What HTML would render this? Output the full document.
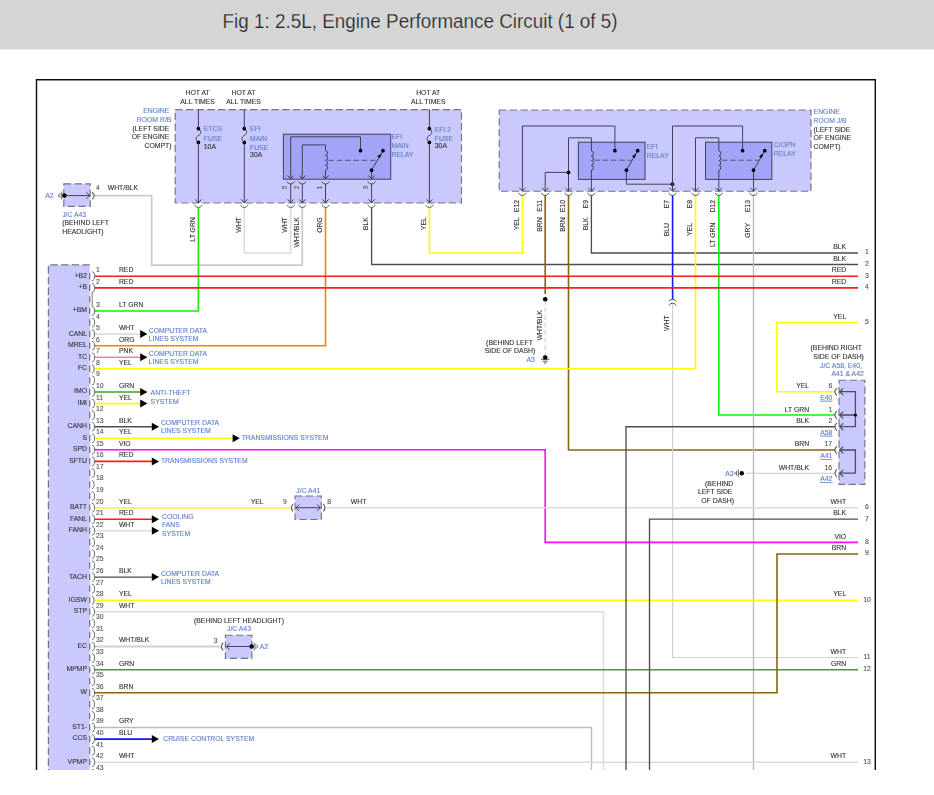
<!DOCTYPE html><html><head><meta charset="utf-8"><title>Fig 1: 2.5L, Engine Performance Circuit (1 of 5)</title><style>html,body{margin:0;padding:0;background:#fff}svg{display:block}</style></head><body><svg width="934" height="795" viewBox="0 0 934 795" font-family="Liberation Sans, Arial, sans-serif">
<defs><clipPath id="clip"><rect x="0" y="0" width="934" height="769.5"/></clipPath><filter id="soft" x="0" y="0" width="934" height="795" filterUnits="userSpaceOnUse"><feGaussianBlur stdDeviation="0.3"/></filter></defs>
<rect x="0" y="0" width="934" height="49.5" fill="#d5d5d5"/>
<text x="222.6" y="28" font-size="19.6" fill="#262626" stroke="#d5d5d5" stroke-width="0.25" textLength="395" lengthAdjust="spacingAndGlyphs">Fig 1: 2.5L, Engine Performance Circuit (1 of 5)</text>
<g clip-path="url(#clip)"><g filter="url(#soft)">
<path d="M36.5,780 V79.7 H875.3 V780" fill="none" stroke="#111" stroke-width="1.4"/>
<rect x="175.2" y="109.6" width="286.3" height="93.4" fill="#c9c9fd" stroke="#747480" stroke-width="1.15" stroke-dasharray="7.3 3.4"/>
<rect x="499.2" y="110.0" width="311.8" height="81.2" fill="#c9c9fd" stroke="#747480" stroke-width="1.15" stroke-dasharray="7.3 3.4"/>
<rect x="48.4" y="264.8" width="41.4" height="540" fill="#c9c9fd"/>
<path d="M89.8,264.8 H48.4 V800" fill="none" stroke="#747480" stroke-width="1.25" stroke-dasharray="7.3 3.4"/>
<path d="M89.7,273 V800" fill="none" stroke="#747480" stroke-width="1.25" stroke-dasharray="6.4 5.17"/>
<rect x="63.8" y="183.8" width="26.4" height="22.6" fill="#c9c9fd" stroke="#747480" stroke-width="1.15" stroke-dasharray="7.3 3.4"/>
<rect x="295.0" y="496.0" width="26.3" height="23.5" fill="#c9c9fd" stroke="#747480" stroke-width="1.15" stroke-dasharray="7.3 3.4"/>
<rect x="225.4" y="635.2" width="26.5" height="23.1" fill="#c9c9fd" stroke="#747480" stroke-width="1.15" stroke-dasharray="7.3 3.4"/>
<rect x="839.0" y="380.2" width="25.9" height="104.2" fill="#c9c9fd" stroke="#747480" stroke-width="1.15" stroke-dasharray="7.3 3.4"/>
<rect x="283.4" y="134.2" width="107.3" height="45.0" fill="#a3a3f7" stroke="#40405a" stroke-width="1"/>
<rect x="578.4" y="142.2" width="66.6" height="37.2" fill="#a3a3f7" stroke="#40405a" stroke-width="1"/>
<rect x="705.5" y="142.2" width="66.3" height="37.2" fill="#a3a3f7" stroke="#40405a" stroke-width="1"/>
<polyline points="94.0,195.6 151.7,195.6 151.7,265.2 302.3,265.2 302.3,207.5" fill="none" stroke="#cbcbcb" stroke-width="1.7" />
<polyline points="198.4,207.5 198.4,311.0 94.0,311.0" fill="none" stroke="#10ee10" stroke-width="1.6" />
<polyline points="244.3,207.5 244.3,253.0 290.7,253.0 290.7,207.5" fill="none" stroke="#dcdcdc" stroke-width="1.6" />
<polyline points="325.5,207.5 325.5,345.7 94.0,345.7" fill="none" stroke="#ff8000" stroke-width="1.6" />
<polyline points="371.6,207.5 371.6,264.5 858.0,264.5" fill="none" stroke="#4e4e4e" stroke-width="1.35" />
<polyline points="429.4,207.5 429.4,253.0 522.4,253.0 522.4,195.5" fill="none" stroke="#ffff00" stroke-width="1.6" />
<polyline points="545.2,195.5 545.2,294.0" fill="none" stroke="#8a640a" stroke-width="1.6" />
<polyline points="545.2,300.0 545.2,356.0" fill="none" stroke="#cfcfcf" stroke-width="1.1" stroke-dasharray="5 2.5"/>
<polyline points="568.5,195.5 568.5,450.0 835.0,450.0" fill="none" stroke="#8a640a" stroke-width="1.6" />
<polyline points="591.4,195.5 591.4,253.0 858.0,253.0" fill="none" stroke="#4e4e4e" stroke-width="1.35" />
<polyline points="672.6,195.5 672.6,299.3" fill="none" stroke="#1414ff" stroke-width="1.6" />
<polyline points="672.6,303.4 672.6,657.5 858.0,657.5" fill="none" stroke="#d2d2d2" stroke-width="1.2" />
<polyline points="695.5,195.5 695.5,368.7 94.0,368.7" fill="none" stroke="#ffff00" stroke-width="1.6" />
<polyline points="718.8,195.5 718.8,415.0 835.0,415.0" fill="none" stroke="#10ee10" stroke-width="1.6" />
<polyline points="753.5,195.5 753.5,780.0" fill="none" stroke="#bcbcbc" stroke-width="1.4" />
<polyline points="94.0,276.2 858.0,276.2" fill="none" stroke="#ff1c1c" stroke-width="1.6" />
<polyline points="94.0,287.9 858.0,287.9" fill="none" stroke="#ff1c1c" stroke-width="1.6" />
<polyline points="94.0,334.1 141.4,334.1" fill="none" stroke="#dcdcdc" stroke-width="1.6" />
<polygon points="147.4,334.1 140.2,330.1 140.2,338.1" fill="#000"/>
<polyline points="94.0,357.3 141.4,357.3" fill="none" stroke="#ff7f9f" stroke-width="1.6" />
<polygon points="147.4,357.3 140.2,353.3 140.2,361.3" fill="#000"/>
<polyline points="94.0,392.0 141.4,392.0" fill="none" stroke="#3aa81a" stroke-width="1.6" />
<polygon points="147.4,392.0 140.2,388.0 140.2,396.0" fill="#000"/>
<polyline points="94.0,403.6 141.4,403.6" fill="none" stroke="#ffff00" stroke-width="1.6" />
<polygon points="147.4,403.6 140.2,399.6 140.2,407.6" fill="#000"/>
<polyline points="94.0,426.7 153.0,426.7" fill="none" stroke="#4e4e4e" stroke-width="1.35" />
<polygon points="159.0,426.7 151.8,422.7 151.8,430.7" fill="#000"/>
<polyline points="94.0,438.3 233.8,438.3" fill="none" stroke="#ffff00" stroke-width="1.6" />
<polygon points="239.8,438.3 232.6,434.3 232.6,442.3" fill="#000"/>
<polyline points="94.0,461.4 153.0,461.4" fill="none" stroke="#ff1c1c" stroke-width="1.6" />
<polygon points="159.0,461.4 151.8,457.4 151.8,465.4" fill="#000"/>
<polyline points="94.0,519.3 153.0,519.3" fill="none" stroke="#ff1c1c" stroke-width="1.6" />
<polygon points="159.0,519.3 151.8,515.3 151.8,523.3" fill="#000"/>
<polyline points="94.0,530.8 153.0,530.8" fill="none" stroke="#dcdcdc" stroke-width="1.6" />
<polygon points="159.0,530.8 151.8,526.8 151.8,534.8" fill="#000"/>
<polyline points="94.0,577.1 153.0,577.1" fill="none" stroke="#4e4e4e" stroke-width="1.35" />
<polygon points="159.0,577.1 151.8,573.1 151.8,581.1" fill="#000"/>
<polyline points="94.0,739.1 153.0,739.1" fill="none" stroke="#1414ff" stroke-width="1.6" />
<polygon points="159.0,739.1 151.8,735.1 151.8,743.1" fill="#000"/>
<polyline points="94.0,449.8 545.2,449.8 545.2,542.4 858.0,542.4" fill="none" stroke="#ff08ff" stroke-width="1.6" />
<polyline points="94.0,507.7 291.0,507.7" fill="none" stroke="#ffff00" stroke-width="1.6" />
<polyline points="325.5,507.7 858.0,507.7" fill="none" stroke="#dcdcdc" stroke-width="1.5" />
<polyline points="94.0,600.2 858.0,600.2" fill="none" stroke="#ffff00" stroke-width="1.6" />
<polyline points="94.0,611.8 603.5,611.8 603.5,780.0" fill="none" stroke="#dcdcdc" stroke-width="1.6" />
<polyline points="94.0,646.5 220.6,646.5" fill="none" stroke="#d2d2d2" stroke-width="1.8" />
<polyline points="94.0,669.7 858.0,669.7" fill="none" stroke="#3aa81a" stroke-width="1.6" />
<polyline points="94.0,692.8 777.0,692.8 777.0,554.0 858.0,554.0" fill="none" stroke="#8a640a" stroke-width="1.6" />
<polyline points="94.0,727.5 591.5,727.5 591.5,780.0" fill="none" stroke="#bcbcbc" stroke-width="1.4" />
<polyline points="94.0,762.2 858.0,762.2" fill="none" stroke="#dcdcdc" stroke-width="1.5" />
<polyline points="858.0,322.5 776.8,322.5 776.8,391.7 835.0,391.7" fill="none" stroke="#ffff00" stroke-width="1.6" />
<polyline points="835.0,426.7 626.0,426.7 626.0,780.0" fill="none" stroke="#4e4e4e" stroke-width="1.35" />
<polyline points="858.0,519.1 649.5,519.1 649.5,780.0" fill="none" stroke="#4e4e4e" stroke-width="1.35" />
<polyline points="746.0,473.2 835.0,473.2" fill="none" stroke="#c8c8c8" stroke-width="1.1" />
<path d="M198.4,109.6 V128.7 M198.4,142.4 V202.8" stroke="#40405a" stroke-width="1" fill="none"/>
<path d="M198.4,128.7 C202.0,131 201.0,134.5 198.4,135.5 C195.8,136.5 194.8,140 198.4,142.4" stroke="#40405a" stroke-width="1" fill="none"/>
<circle cx="198.4" cy="128.7" r="1.85" fill="#000"/>
<circle cx="198.4" cy="142.4" r="1.85" fill="#000"/>
<polyline points="195.3,199.3 198.4,202.8 201.5,199.3" fill="none" stroke="#40405a" stroke-width="1"/>
<path d="M194.4,205.0 Q198.4,210.0 202.4,205.0" fill="none" stroke="#585858" stroke-width="1"/>
<path d="M244.3,109.6 V128.7 M244.3,142.4 V202.8" stroke="#40405a" stroke-width="1" fill="none"/>
<path d="M244.3,128.7 C247.9,131 246.9,134.5 244.3,135.5 C241.70000000000002,136.5 240.70000000000002,140 244.3,142.4" stroke="#40405a" stroke-width="1" fill="none"/>
<circle cx="244.3" cy="128.7" r="1.85" fill="#000"/>
<circle cx="244.3" cy="142.4" r="1.85" fill="#000"/>
<polyline points="241.2,199.3 244.3,202.8 247.4,199.3" fill="none" stroke="#40405a" stroke-width="1"/>
<path d="M240.3,205.0 Q244.3,210.0 248.3,205.0" fill="none" stroke="#585858" stroke-width="1"/>
<path d="M429.4,109.6 V128.7 M429.4,142.4 V202.8" stroke="#40405a" stroke-width="1" fill="none"/>
<path d="M429.4,128.7 C433.0,131 432.0,134.5 429.4,135.5 C426.79999999999995,136.5 425.79999999999995,140 429.4,142.4" stroke="#40405a" stroke-width="1" fill="none"/>
<circle cx="429.4" cy="128.7" r="1.85" fill="#000"/>
<circle cx="429.4" cy="142.4" r="1.85" fill="#000"/>
<polyline points="426.3,199.3 429.4,202.8 432.5,199.3" fill="none" stroke="#40405a" stroke-width="1"/>
<path d="M425.4,205.0 Q429.4,210.0 433.4,205.0" fill="none" stroke="#585858" stroke-width="1"/>
<path d="M290.7,179 V136.8 H360.5 V150.7" fill="none" stroke="#40405a" stroke-width="1" />
<path d="M302.3,179 V144.9 H325.5 V150.7 M325.5,170 V179" fill="none" stroke="#40405a" stroke-width="1" />
<path d="M325.5,150.7 a2.05,2.41 0 0 1 0,4.83 a2.05,2.41 0 0 1 0,4.83 a2.05,2.41 0 0 1 0,4.83 a2.05,2.41 0 0 1 0,4.83" fill="none" stroke="#40405a" stroke-width="1"/>
<path d="M328.5,160.3 H376.5" fill="none" stroke="#40405a" stroke-width="0.8" stroke-dasharray="5.5 2.8"/>
<path d="M371.6,179 V170.2 L383,150.7" fill="none" stroke="#40405a" stroke-width="1" />
<polygon points="381.6,153.2 377.2,156.4 380,158" fill="#000"/>
<circle cx="360.5" cy="150.7" r="1.85" fill="#000"/>
<circle cx="383.0" cy="150.7" r="1.85" fill="#000"/>
<circle cx="371.6" cy="170.2" r="1.85" fill="#000"/>
<polyline points="287.6,175.5 290.7,179.0 293.8,175.5" fill="none" stroke="#40405a" stroke-width="1"/>
<path d="M286.7,181.6 Q290.7,186.6 294.7,181.6" fill="none" stroke="#40405a" stroke-width="1"/>
<path d="M290.7,183.8 V202.8" fill="none" stroke="#40405a" stroke-width="1" />
<polyline points="287.6,199.3 290.7,202.8 293.8,199.3" fill="none" stroke="#40405a" stroke-width="1"/>
<path d="M286.7,205.0 Q290.7,210.0 294.7,205.0" fill="none" stroke="#585858" stroke-width="1"/>
<text x="287.1" y="189.2" fill="#555" stroke="#555" stroke-width="0.12" font-size="6.4" text-anchor="start" transform="rotate(-90 287.1 189.2)">5</text>
<polyline points="299.2,175.5 302.3,179.0 305.4,175.5" fill="none" stroke="#40405a" stroke-width="1"/>
<path d="M298.3,181.6 Q302.3,186.6 306.3,181.6" fill="none" stroke="#40405a" stroke-width="1"/>
<path d="M302.3,183.8 V202.8" fill="none" stroke="#40405a" stroke-width="1" />
<polyline points="299.2,199.3 302.3,202.8 305.4,199.3" fill="none" stroke="#40405a" stroke-width="1"/>
<path d="M298.3,205.0 Q302.3,210.0 306.3,205.0" fill="none" stroke="#585858" stroke-width="1"/>
<text x="298.7" y="189.2" fill="#555" stroke="#555" stroke-width="0.12" font-size="6.4" text-anchor="start" transform="rotate(-90 298.7 189.2)">2</text>
<polyline points="322.4,175.5 325.5,179.0 328.6,175.5" fill="none" stroke="#40405a" stroke-width="1"/>
<path d="M321.5,181.6 Q325.5,186.6 329.5,181.6" fill="none" stroke="#40405a" stroke-width="1"/>
<path d="M325.5,183.8 V202.8" fill="none" stroke="#40405a" stroke-width="1" />
<polyline points="322.4,199.3 325.5,202.8 328.6,199.3" fill="none" stroke="#40405a" stroke-width="1"/>
<path d="M321.5,205.0 Q325.5,210.0 329.5,205.0" fill="none" stroke="#585858" stroke-width="1"/>
<text x="321.9" y="189.2" fill="#555" stroke="#555" stroke-width="0.12" font-size="6.4" text-anchor="start" transform="rotate(-90 321.9 189.2)">1</text>
<polyline points="368.5,175.5 371.6,179.0 374.7,175.5" fill="none" stroke="#40405a" stroke-width="1"/>
<path d="M367.6,181.6 Q371.6,186.6 375.6,181.6" fill="none" stroke="#40405a" stroke-width="1"/>
<path d="M371.6,183.8 V202.8" fill="none" stroke="#40405a" stroke-width="1" />
<polyline points="368.5,199.3 371.6,202.8 374.7,199.3" fill="none" stroke="#40405a" stroke-width="1"/>
<path d="M367.6,205.0 Q371.6,210.0 375.6,205.0" fill="none" stroke="#585858" stroke-width="1"/>
<text x="368.0" y="189.2" fill="#555" stroke="#555" stroke-width="0.12" font-size="6.4" text-anchor="start" transform="rotate(-90 368.0 189.2)">3</text>
<path d="M522.4,191 V126 H614.9 V150.7" fill="none" stroke="#40405a" stroke-width="1" />
<path d="M545.2,191 V172.4 H568.5" fill="none" stroke="#40405a" stroke-width="1" />
<path d="M568.5,191 V137.8 H591.4 V151 M591.4,170.2 V191" fill="none" stroke="#40405a" stroke-width="1" />
<path d="M591.4,151 a2.04,2.40 0 0 1 0,4.80 a2.04,2.40 0 0 1 0,4.80 a2.04,2.40 0 0 1 0,4.80 a2.04,2.40 0 0 1 0,4.80" fill="none" stroke="#40405a" stroke-width="1"/>
<path d="M594.4,160.2 H631" fill="none" stroke="#40405a" stroke-width="0.8" stroke-dasharray="5.5 2.8"/>
<path d="M626.4,170.2 L637.7,150.7 M626.4,170.2 V184.2 H672.5" fill="none" stroke="#40405a" stroke-width="1" />
<polygon points="636.3,153.2 631.9,156.4 634.7,158" fill="#000"/>
<circle cx="614.9" cy="150.7" r="1.85" fill="#000"/>
<circle cx="637.7" cy="150.7" r="1.85" fill="#000"/>
<circle cx="626.4" cy="170.2" r="1.85" fill="#000"/>
<circle cx="568.5" cy="172.4" r="1.85" fill="#000"/>
<circle cx="672.5" cy="184.2" r="1.85" fill="#000"/>
<path d="M672.5,191 V126 H742.6 V150.7" fill="none" stroke="#40405a" stroke-width="1" />
<path d="M695.5,191 V137.8 H718.8 V151 M718.8,170.2 V191" fill="none" stroke="#40405a" stroke-width="1" />
<path d="M718.8,151 a2.04,2.40 0 0 1 0,4.80 a2.04,2.40 0 0 1 0,4.80 a2.04,2.40 0 0 1 0,4.80 a2.04,2.40 0 0 1 0,4.80" fill="none" stroke="#40405a" stroke-width="1"/>
<path d="M721.8,160.2 H759" fill="none" stroke="#40405a" stroke-width="0.8" stroke-dasharray="5.5 2.8"/>
<path d="M753.5,191 V170.2 L764.8,150.7" fill="none" stroke="#40405a" stroke-width="1" />
<polygon points="763.4,153.2 759,156.4 761.8,158" fill="#000"/>
<circle cx="742.6" cy="150.7" r="1.85" fill="#000"/>
<circle cx="764.8" cy="150.7" r="1.85" fill="#000"/>
<circle cx="753.5" cy="170.2" r="1.85" fill="#000"/>
<polyline points="519.3,187.7 522.4,191.2 525.5,187.7" fill="none" stroke="#40405a" stroke-width="1"/>
<path d="M518.4,193.0 Q522.4,198.0 526.4,193.0" fill="none" stroke="#4a4a4a" stroke-width="1"/>
<polyline points="542.1,187.7 545.2,191.2 548.3,187.7" fill="none" stroke="#40405a" stroke-width="1"/>
<path d="M541.2,193.0 Q545.2,198.0 549.2,193.0" fill="none" stroke="#4a4a4a" stroke-width="1"/>
<polyline points="565.4,187.7 568.5,191.2 571.6,187.7" fill="none" stroke="#40405a" stroke-width="1"/>
<path d="M564.5,193.0 Q568.5,198.0 572.5,193.0" fill="none" stroke="#4a4a4a" stroke-width="1"/>
<polyline points="588.3,187.7 591.4,191.2 594.5,187.7" fill="none" stroke="#40405a" stroke-width="1"/>
<path d="M587.4,193.0 Q591.4,198.0 595.4,193.0" fill="none" stroke="#4a4a4a" stroke-width="1"/>
<polyline points="669.4,187.7 672.5,191.2 675.6,187.7" fill="none" stroke="#40405a" stroke-width="1"/>
<path d="M668.5,193.0 Q672.5,198.0 676.5,193.0" fill="none" stroke="#4a4a4a" stroke-width="1"/>
<polyline points="692.4,187.7 695.5,191.2 698.6,187.7" fill="none" stroke="#40405a" stroke-width="1"/>
<path d="M691.5,193.0 Q695.5,198.0 699.5,193.0" fill="none" stroke="#4a4a4a" stroke-width="1"/>
<polyline points="715.7,187.7 718.8,191.2 721.9,187.7" fill="none" stroke="#40405a" stroke-width="1"/>
<path d="M714.8,193.0 Q718.8,198.0 722.8,193.0" fill="none" stroke="#4a4a4a" stroke-width="1"/>
<polyline points="750.4,187.7 753.5,191.2 756.6,187.7" fill="none" stroke="#40405a" stroke-width="1"/>
<path d="M749.5,193.0 Q753.5,198.0 757.5,193.0" fill="none" stroke="#4a4a4a" stroke-width="1"/>
<circle cx="545.2" cy="299.2" r="2.3" fill="#000"/>
<circle cx="545.2" cy="357.5" r="2.3" fill="#000"/>
<path d="M541,359.3 H549.4 M542.6,361.2 H547.8 M544,363 H546.4" fill="none" stroke="#333" stroke-width="0.8" />
<path d="M668.8,301.4 Q672.6,296.8 676.4,301.4 M668.8,305.6 Q672.6,300.6 676.4,305.6" fill="none" stroke="#4a4a4a" stroke-width="1" />
<path d="M91.9,271.8 A2.7,4.4 0 0 1 91.9,280.6" fill="none" stroke="#6c6c7c" stroke-width="1.0" />
<text x="96.0" y="272.1" fill="#555" stroke="#555" stroke-width="0.12" font-size="6.85" text-anchor="start">1</text>
<path d="M91.9,283.5 A2.7,4.4 0 0 1 91.9,292.3" fill="none" stroke="#6c6c7c" stroke-width="1.0" />
<text x="96.0" y="283.8" fill="#555" stroke="#555" stroke-width="0.12" font-size="6.85" text-anchor="start">2</text>
<path d="M91.9,306.6 A2.7,4.4 0 0 1 91.9,315.4" fill="none" stroke="#6c6c7c" stroke-width="1.0" />
<text x="96.0" y="306.9" fill="#555" stroke="#555" stroke-width="0.12" font-size="6.85" text-anchor="start">3</text>
<path d="M91.9,318.2 A2.7,4.4 0 0 1 91.9,327.0" fill="none" stroke="#6c6c7c" stroke-width="1.0" />
<text x="96.0" y="318.5" fill="#555" stroke="#555" stroke-width="0.12" font-size="6.85" text-anchor="start">4</text>
<path d="M91.9,329.7 A2.7,4.4 0 0 1 91.9,338.5" fill="none" stroke="#6c6c7c" stroke-width="1.0" />
<text x="96.0" y="330.0" fill="#555" stroke="#555" stroke-width="0.12" font-size="6.85" text-anchor="start">5</text>
<path d="M91.9,341.3 A2.7,4.4 0 0 1 91.9,350.1" fill="none" stroke="#6c6c7c" stroke-width="1.0" />
<text x="96.0" y="341.6" fill="#555" stroke="#555" stroke-width="0.12" font-size="6.85" text-anchor="start">6</text>
<path d="M91.9,352.9 A2.7,4.4 0 0 1 91.9,361.7" fill="none" stroke="#6c6c7c" stroke-width="1.0" />
<text x="96.0" y="353.2" fill="#555" stroke="#555" stroke-width="0.12" font-size="6.85" text-anchor="start">7</text>
<path d="M91.9,364.5 A2.7,4.4 0 0 1 91.9,373.2" fill="none" stroke="#6c6c7c" stroke-width="1.0" />
<text x="96.0" y="364.8" fill="#555" stroke="#555" stroke-width="0.12" font-size="6.85" text-anchor="start">8</text>
<path d="M91.9,376.0 A2.7,4.4 0 0 1 91.9,384.8" fill="none" stroke="#6c6c7c" stroke-width="1.0" />
<text x="96.0" y="376.3" fill="#555" stroke="#555" stroke-width="0.12" font-size="6.85" text-anchor="start">9</text>
<path d="M91.9,387.6 A2.7,4.4 0 0 1 91.9,396.4" fill="none" stroke="#6c6c7c" stroke-width="1.0" />
<text x="96.0" y="387.9" fill="#555" stroke="#555" stroke-width="0.12" font-size="6.85" text-anchor="start">10</text>
<path d="M91.9,399.2 A2.7,4.4 0 0 1 91.9,408.0" fill="none" stroke="#6c6c7c" stroke-width="1.0" />
<text x="96.0" y="399.5" fill="#555" stroke="#555" stroke-width="0.12" font-size="6.85" text-anchor="start">11</text>
<path d="M91.9,410.7 A2.7,4.4 0 0 1 91.9,419.5" fill="none" stroke="#6c6c7c" stroke-width="1.0" />
<text x="96.0" y="411.0" fill="#555" stroke="#555" stroke-width="0.12" font-size="6.85" text-anchor="start">12</text>
<path d="M91.9,422.3 A2.7,4.4 0 0 1 91.9,431.1" fill="none" stroke="#6c6c7c" stroke-width="1.0" />
<text x="96.0" y="422.6" fill="#555" stroke="#555" stroke-width="0.12" font-size="6.85" text-anchor="start">13</text>
<path d="M91.9,433.9 A2.7,4.4 0 0 1 91.9,442.7" fill="none" stroke="#6c6c7c" stroke-width="1.0" />
<text x="96.0" y="434.2" fill="#555" stroke="#555" stroke-width="0.12" font-size="6.85" text-anchor="start">14</text>
<path d="M91.9,445.4 A2.7,4.4 0 0 1 91.9,454.2" fill="none" stroke="#6c6c7c" stroke-width="1.0" />
<text x="96.0" y="445.7" fill="#555" stroke="#555" stroke-width="0.12" font-size="6.85" text-anchor="start">15</text>
<path d="M91.9,457.0 A2.7,4.4 0 0 1 91.9,465.8" fill="none" stroke="#6c6c7c" stroke-width="1.0" />
<text x="96.0" y="457.3" fill="#555" stroke="#555" stroke-width="0.12" font-size="6.85" text-anchor="start">16</text>
<path d="M91.9,468.6 A2.7,4.4 0 0 1 91.9,477.4" fill="none" stroke="#6c6c7c" stroke-width="1.0" />
<text x="96.0" y="468.9" fill="#555" stroke="#555" stroke-width="0.12" font-size="6.85" text-anchor="start">17</text>
<path d="M91.9,480.2 A2.7,4.4 0 0 1 91.9,488.9" fill="none" stroke="#6c6c7c" stroke-width="1.0" />
<text x="96.0" y="480.4" fill="#555" stroke="#555" stroke-width="0.12" font-size="6.85" text-anchor="start">18</text>
<path d="M91.9,491.7 A2.7,4.4 0 0 1 91.9,500.5" fill="none" stroke="#6c6c7c" stroke-width="1.0" />
<text x="96.0" y="492.0" fill="#555" stroke="#555" stroke-width="0.12" font-size="6.85" text-anchor="start">19</text>
<path d="M91.9,503.3 A2.7,4.4 0 0 1 91.9,512.1" fill="none" stroke="#6c6c7c" stroke-width="1.0" />
<text x="96.0" y="503.6" fill="#555" stroke="#555" stroke-width="0.12" font-size="6.85" text-anchor="start">20</text>
<path d="M91.9,514.9 A2.7,4.4 0 0 1 91.9,523.7" fill="none" stroke="#6c6c7c" stroke-width="1.0" />
<text x="96.0" y="515.2" fill="#555" stroke="#555" stroke-width="0.12" font-size="6.85" text-anchor="start">21</text>
<path d="M91.9,526.4 A2.7,4.4 0 0 1 91.9,535.2" fill="none" stroke="#6c6c7c" stroke-width="1.0" />
<text x="96.0" y="526.7" fill="#555" stroke="#555" stroke-width="0.12" font-size="6.85" text-anchor="start">22</text>
<path d="M91.9,538.0 A2.7,4.4 0 0 1 91.9,546.8" fill="none" stroke="#6c6c7c" stroke-width="1.0" />
<text x="96.0" y="538.3" fill="#555" stroke="#555" stroke-width="0.12" font-size="6.85" text-anchor="start">23</text>
<path d="M91.9,549.6 A2.7,4.4 0 0 1 91.9,558.4" fill="none" stroke="#6c6c7c" stroke-width="1.0" />
<text x="96.0" y="549.9" fill="#555" stroke="#555" stroke-width="0.12" font-size="6.85" text-anchor="start">24</text>
<path d="M91.9,561.1 A2.7,4.4 0 0 1 91.9,569.9" fill="none" stroke="#6c6c7c" stroke-width="1.0" />
<text x="96.0" y="561.4" fill="#555" stroke="#555" stroke-width="0.12" font-size="6.85" text-anchor="start">25</text>
<path d="M91.9,572.7 A2.7,4.4 0 0 1 91.9,581.5" fill="none" stroke="#6c6c7c" stroke-width="1.0" />
<text x="96.0" y="573.0" fill="#555" stroke="#555" stroke-width="0.12" font-size="6.85" text-anchor="start">26</text>
<path d="M91.9,584.3 A2.7,4.4 0 0 1 91.9,593.1" fill="none" stroke="#6c6c7c" stroke-width="1.0" />
<text x="96.0" y="584.6" fill="#555" stroke="#555" stroke-width="0.12" font-size="6.85" text-anchor="start">27</text>
<path d="M91.9,595.9 A2.7,4.4 0 0 1 91.9,604.6" fill="none" stroke="#6c6c7c" stroke-width="1.0" />
<text x="96.0" y="596.1" fill="#555" stroke="#555" stroke-width="0.12" font-size="6.85" text-anchor="start">28</text>
<path d="M91.9,607.4 A2.7,4.4 0 0 1 91.9,616.2" fill="none" stroke="#6c6c7c" stroke-width="1.0" />
<text x="96.0" y="607.7" fill="#555" stroke="#555" stroke-width="0.12" font-size="6.85" text-anchor="start">29</text>
<path d="M91.9,619.0 A2.7,4.4 0 0 1 91.9,627.8" fill="none" stroke="#6c6c7c" stroke-width="1.0" />
<text x="96.0" y="619.3" fill="#555" stroke="#555" stroke-width="0.12" font-size="6.85" text-anchor="start">30</text>
<path d="M91.9,630.6 A2.7,4.4 0 0 1 91.9,639.4" fill="none" stroke="#6c6c7c" stroke-width="1.0" />
<text x="96.0" y="630.9" fill="#555" stroke="#555" stroke-width="0.12" font-size="6.85" text-anchor="start">31</text>
<path d="M91.9,642.1 A2.7,4.4 0 0 1 91.9,650.9" fill="none" stroke="#6c6c7c" stroke-width="1.0" />
<text x="96.0" y="642.4" fill="#555" stroke="#555" stroke-width="0.12" font-size="6.85" text-anchor="start">32</text>
<path d="M91.9,653.7 A2.7,4.4 0 0 1 91.9,662.5" fill="none" stroke="#6c6c7c" stroke-width="1.0" />
<text x="96.0" y="654.0" fill="#555" stroke="#555" stroke-width="0.12" font-size="6.85" text-anchor="start">33</text>
<path d="M91.9,665.3 A2.7,4.4 0 0 1 91.9,674.1" fill="none" stroke="#6c6c7c" stroke-width="1.0" />
<text x="96.0" y="665.6" fill="#555" stroke="#555" stroke-width="0.12" font-size="6.85" text-anchor="start">34</text>
<path d="M91.9,676.8 A2.7,4.4 0 0 1 91.9,685.6" fill="none" stroke="#6c6c7c" stroke-width="1.0" />
<text x="96.0" y="677.1" fill="#555" stroke="#555" stroke-width="0.12" font-size="6.85" text-anchor="start">35</text>
<path d="M91.9,688.4 A2.7,4.4 0 0 1 91.9,697.2" fill="none" stroke="#6c6c7c" stroke-width="1.0" />
<text x="96.0" y="688.7" fill="#555" stroke="#555" stroke-width="0.12" font-size="6.85" text-anchor="start">36</text>
<path d="M91.9,700.0 A2.7,4.4 0 0 1 91.9,708.8" fill="none" stroke="#6c6c7c" stroke-width="1.0" />
<text x="96.0" y="700.3" fill="#555" stroke="#555" stroke-width="0.12" font-size="6.85" text-anchor="start">37</text>
<path d="M91.9,711.6 A2.7,4.4 0 0 1 91.9,720.4" fill="none" stroke="#6c6c7c" stroke-width="1.0" />
<text x="96.0" y="711.9" fill="#555" stroke="#555" stroke-width="0.12" font-size="6.85" text-anchor="start">38</text>
<path d="M91.9,723.1 A2.7,4.4 0 0 1 91.9,731.9" fill="none" stroke="#6c6c7c" stroke-width="1.0" />
<text x="96.0" y="723.4" fill="#555" stroke="#555" stroke-width="0.12" font-size="6.85" text-anchor="start">39</text>
<path d="M91.9,734.7 A2.7,4.4 0 0 1 91.9,743.5" fill="none" stroke="#6c6c7c" stroke-width="1.0" />
<text x="96.0" y="735.0" fill="#555" stroke="#555" stroke-width="0.12" font-size="6.85" text-anchor="start">40</text>
<path d="M91.9,746.3 A2.7,4.4 0 0 1 91.9,755.1" fill="none" stroke="#6c6c7c" stroke-width="1.0" />
<text x="96.0" y="746.6" fill="#555" stroke="#555" stroke-width="0.12" font-size="6.85" text-anchor="start">41</text>
<path d="M91.9,757.8 A2.7,4.4 0 0 1 91.9,766.6" fill="none" stroke="#6c6c7c" stroke-width="1.0" />
<text x="96.0" y="758.1" fill="#555" stroke="#555" stroke-width="0.12" font-size="6.85" text-anchor="start">42</text>
<path d="M91.9,769.4 A2.7,4.4 0 0 1 91.9,778.2" fill="none" stroke="#6c6c7c" stroke-width="1.0" />
<text x="96.0" y="769.7" fill="#555" stroke="#555" stroke-width="0.12" font-size="6.85" text-anchor="start">43</text>
<path d="M92.2,292 V306" fill="none" stroke="#585858" stroke-width="0.8" />
<text x="87.0" y="277.6" fill="#333333" stroke="#333333" stroke-width="0.12" font-size="6.85" text-anchor="end">+B2</text>
<text x="87.0" y="289.2" fill="#333333" stroke="#333333" stroke-width="0.12" font-size="6.85" text-anchor="end">+B</text>
<text x="87.0" y="312.4" fill="#333333" stroke="#333333" stroke-width="0.12" font-size="6.85" text-anchor="end">+BM</text>
<text x="87.0" y="335.5" fill="#333333" stroke="#333333" stroke-width="0.12" font-size="6.85" text-anchor="end">CANL</text>
<text x="87.0" y="347.1" fill="#333333" stroke="#333333" stroke-width="0.12" font-size="6.85" text-anchor="end">MREL</text>
<text x="87.0" y="358.6" fill="#333333" stroke="#333333" stroke-width="0.12" font-size="6.85" text-anchor="end">TC</text>
<text x="87.0" y="370.2" fill="#333333" stroke="#333333" stroke-width="0.12" font-size="6.85" text-anchor="end">FC</text>
<text x="87.0" y="393.3" fill="#333333" stroke="#333333" stroke-width="0.12" font-size="6.85" text-anchor="end">IMO</text>
<text x="87.0" y="404.9" fill="#333333" stroke="#333333" stroke-width="0.12" font-size="6.85" text-anchor="end">IMI</text>
<text x="87.0" y="428.1" fill="#333333" stroke="#333333" stroke-width="0.12" font-size="6.85" text-anchor="end">CANH</text>
<text x="87.0" y="439.6" fill="#333333" stroke="#333333" stroke-width="0.12" font-size="6.85" text-anchor="end">S</text>
<text x="87.0" y="451.2" fill="#333333" stroke="#333333" stroke-width="0.12" font-size="6.85" text-anchor="end">SPD</text>
<text x="87.0" y="462.8" fill="#333333" stroke="#333333" stroke-width="0.12" font-size="6.85" text-anchor="end">SFTU</text>
<text x="87.0" y="509.0" fill="#333333" stroke="#333333" stroke-width="0.12" font-size="6.85" text-anchor="end">BATT</text>
<text x="87.0" y="520.6" fill="#333333" stroke="#333333" stroke-width="0.12" font-size="6.85" text-anchor="end">FANL</text>
<text x="87.0" y="532.2" fill="#333333" stroke="#333333" stroke-width="0.12" font-size="6.85" text-anchor="end">FANH</text>
<text x="87.0" y="578.5" fill="#333333" stroke="#333333" stroke-width="0.12" font-size="6.85" text-anchor="end">TACH</text>
<text x="87.0" y="601.6" fill="#333333" stroke="#333333" stroke-width="0.12" font-size="6.85" text-anchor="end">IGSW</text>
<text x="87.0" y="613.2" fill="#333333" stroke="#333333" stroke-width="0.12" font-size="6.85" text-anchor="end">STP</text>
<text x="87.0" y="647.9" fill="#333333" stroke="#333333" stroke-width="0.12" font-size="6.85" text-anchor="end">EC</text>
<text x="87.0" y="671.0" fill="#333333" stroke="#333333" stroke-width="0.12" font-size="6.85" text-anchor="end">MPMP</text>
<text x="87.0" y="694.2" fill="#333333" stroke="#333333" stroke-width="0.12" font-size="6.85" text-anchor="end">W</text>
<text x="87.0" y="728.9" fill="#333333" stroke="#333333" stroke-width="0.12" font-size="6.85" text-anchor="end">ST1-</text>
<text x="87.0" y="740.4" fill="#333333" stroke="#333333" stroke-width="0.12" font-size="6.85" text-anchor="end">CCS</text>
<text x="87.0" y="763.6" fill="#333333" stroke="#333333" stroke-width="0.12" font-size="6.85" text-anchor="end">VPMP</text>
<text x="118.9" y="272.1" fill="#333333" stroke="#333333" stroke-width="0.12" font-size="6.85" text-anchor="start">RED</text>
<text x="118.9" y="283.8" fill="#333333" stroke="#333333" stroke-width="0.12" font-size="6.85" text-anchor="start">RED</text>
<text x="118.9" y="306.9" fill="#333333" stroke="#333333" stroke-width="0.12" font-size="6.85" text-anchor="start">LT GRN</text>
<text x="118.9" y="330.0" fill="#333333" stroke="#333333" stroke-width="0.12" font-size="6.85" text-anchor="start">WHT</text>
<text x="118.9" y="341.6" fill="#333333" stroke="#333333" stroke-width="0.12" font-size="6.85" text-anchor="start">ORG</text>
<text x="118.9" y="353.2" fill="#333333" stroke="#333333" stroke-width="0.12" font-size="6.85" text-anchor="start">PNK</text>
<text x="118.9" y="364.8" fill="#333333" stroke="#333333" stroke-width="0.12" font-size="6.85" text-anchor="start">YEL</text>
<text x="118.9" y="387.9" fill="#333333" stroke="#333333" stroke-width="0.12" font-size="6.85" text-anchor="start">GRN</text>
<text x="118.9" y="399.5" fill="#333333" stroke="#333333" stroke-width="0.12" font-size="6.85" text-anchor="start">YEL</text>
<text x="118.9" y="422.6" fill="#333333" stroke="#333333" stroke-width="0.12" font-size="6.85" text-anchor="start">BLK</text>
<text x="118.9" y="434.2" fill="#333333" stroke="#333333" stroke-width="0.12" font-size="6.85" text-anchor="start">YEL</text>
<text x="118.9" y="445.7" fill="#333333" stroke="#333333" stroke-width="0.12" font-size="6.85" text-anchor="start">VIO</text>
<text x="118.9" y="457.3" fill="#333333" stroke="#333333" stroke-width="0.12" font-size="6.85" text-anchor="start">RED</text>
<text x="118.9" y="503.6" fill="#333333" stroke="#333333" stroke-width="0.12" font-size="6.85" text-anchor="start">YEL</text>
<text x="118.9" y="515.2" fill="#333333" stroke="#333333" stroke-width="0.12" font-size="6.85" text-anchor="start">RED</text>
<text x="118.9" y="526.7" fill="#333333" stroke="#333333" stroke-width="0.12" font-size="6.85" text-anchor="start">WHT</text>
<text x="118.9" y="573.0" fill="#333333" stroke="#333333" stroke-width="0.12" font-size="6.85" text-anchor="start">BLK</text>
<text x="118.9" y="596.1" fill="#333333" stroke="#333333" stroke-width="0.12" font-size="6.85" text-anchor="start">YEL</text>
<text x="118.9" y="607.7" fill="#333333" stroke="#333333" stroke-width="0.12" font-size="6.85" text-anchor="start">WHT</text>
<text x="118.9" y="642.4" fill="#333333" stroke="#333333" stroke-width="0.12" font-size="6.85" text-anchor="start">WHT/BLK</text>
<text x="118.9" y="665.6" fill="#333333" stroke="#333333" stroke-width="0.12" font-size="6.85" text-anchor="start">GRN</text>
<text x="118.9" y="688.7" fill="#333333" stroke="#333333" stroke-width="0.12" font-size="6.85" text-anchor="start">BRN</text>
<text x="118.9" y="723.4" fill="#333333" stroke="#333333" stroke-width="0.12" font-size="6.85" text-anchor="start">GRY</text>
<text x="118.9" y="735.0" fill="#333333" stroke="#333333" stroke-width="0.12" font-size="6.85" text-anchor="start">BLU</text>
<text x="118.9" y="758.1" fill="#333333" stroke="#333333" stroke-width="0.12" font-size="6.85" text-anchor="start">WHT</text>
<text x="148.7" y="332.6" fill="#5b7fc9" stroke="#5b7fc9" stroke-width="0.12" font-size="6.85" text-anchor="start">COMPUTER DATA</text>
<text x="148.7" y="340.9" fill="#5b7fc9" stroke="#5b7fc9" stroke-width="0.12" font-size="6.85" text-anchor="start">LINES SYSTEM</text>
<text x="148.7" y="355.8" fill="#5b7fc9" stroke="#5b7fc9" stroke-width="0.12" font-size="6.85" text-anchor="start">COMPUTER DATA</text>
<text x="148.7" y="364.1" fill="#5b7fc9" stroke="#5b7fc9" stroke-width="0.12" font-size="6.85" text-anchor="start">LINES SYSTEM</text>
<text x="150.6" y="394.7" fill="#5b7fc9" stroke="#5b7fc9" stroke-width="0.12" font-size="6.85" text-anchor="start">ANTI-THEFT</text>
<text x="150.6" y="403.7" fill="#5b7fc9" stroke="#5b7fc9" stroke-width="0.12" font-size="6.85" text-anchor="start">SYSTEM</text>
<text x="160.9" y="424.7" fill="#5b7fc9" stroke="#5b7fc9" stroke-width="0.12" font-size="6.85" text-anchor="start">COMPUTER DATA</text>
<text x="160.9" y="433.3" fill="#5b7fc9" stroke="#5b7fc9" stroke-width="0.12" font-size="6.85" text-anchor="start">LINES SYSTEM</text>
<text x="241.7" y="440.0" fill="#5b7fc9" stroke="#5b7fc9" stroke-width="0.12" font-size="6.85" text-anchor="start">TRANSMISSIONS SYSTEM</text>
<text x="160.9" y="463.2" fill="#5b7fc9" stroke="#5b7fc9" stroke-width="0.12" font-size="6.85" text-anchor="start">TRANSMISSIONS SYSTEM</text>
<text x="162.0" y="518.7" fill="#5b7fc9" stroke="#5b7fc9" stroke-width="0.12" font-size="6.85" text-anchor="start">COOLING</text>
<text x="162.0" y="527.2" fill="#5b7fc9" stroke="#5b7fc9" stroke-width="0.12" font-size="6.85" text-anchor="start">FANS</text>
<text x="162.0" y="535.7" fill="#5b7fc9" stroke="#5b7fc9" stroke-width="0.12" font-size="6.85" text-anchor="start">SYSTEM</text>
<text x="160.9" y="576.0" fill="#5b7fc9" stroke="#5b7fc9" stroke-width="0.12" font-size="6.85" text-anchor="start">COMPUTER DATA</text>
<text x="160.9" y="584.2" fill="#5b7fc9" stroke="#5b7fc9" stroke-width="0.12" font-size="6.85" text-anchor="start">LINES SYSTEM</text>
<text x="163.2" y="741.0" fill="#5b7fc9" stroke="#5b7fc9" stroke-width="0.12" font-size="6.85" text-anchor="start">CRUISE CONTROL SYSTEM</text>
<path d="M64,195.6 H89.7 M86.5,192.4 L89.7,195.6 L86.5,198.8" fill="none" stroke="#40405a" stroke-width="1" />
<circle cx="64.3" cy="195.6" r="2.3" fill="#000"/>
<path d="M61.6,191.6 V199.6" fill="none" stroke="#666" stroke-width="0.9" />
<path d="M59.9,192.9 V198.3" fill="none" stroke="#777" stroke-width="0.9" />
<path d="M58.3,194.2 V197" fill="none" stroke="#888" stroke-width="0.9" />
<path d="M92,191.9 Q93.2,192.6 94.4,195.6 Q93.2,198.6 92,199.3" fill="none" stroke="#585858" stroke-width="1.1" />
<text x="45.3" y="197.8" fill="#5b7fc9" stroke="#5b7fc9" stroke-width="0.12" font-size="6.85" text-anchor="start">A2</text>
<text x="96.0" y="190.3" fill="#555" stroke="#555" stroke-width="0.12" font-size="6.85" text-anchor="start">4</text>
<text x="107.7" y="190.3" fill="#333333" stroke="#333333" stroke-width="0.12" font-size="6.85" text-anchor="start">WHT/BLK</text>
<text x="62.2" y="216.5" fill="#5b7fc9" stroke="#5b7fc9" stroke-width="0.12" font-size="6.85" text-anchor="start">J/C A43</text>
<text x="62.2" y="225.2" fill="#333333" stroke="#333333" stroke-width="0.12" font-size="6.85" text-anchor="start">(BEHIND LEFT</text>
<text x="62.2" y="233.8" fill="#333333" stroke="#333333" stroke-width="0.12" font-size="6.85" text-anchor="start">HEADLIGHT)</text>
<path d="M296,507.7 H320.3 M299.2,504.5 L296,507.7 L299.2,510.9 M317.1,504.5 L320.3,507.7 L317.1,510.9" fill="none" stroke="#40405a" stroke-width="1" />
<path d="M293,504.0 Q290,507.7 293,511.4" fill="none" stroke="#585858" stroke-width="1.1" />
<path d="M323.4,504.0 Q326.4,507.7 323.4,511.4" fill="none" stroke="#585858" stroke-width="1.1" />
<text x="308.3" y="492.9" fill="#5b7fc9" stroke="#5b7fc9" stroke-width="0.12" font-size="6.85" text-anchor="middle">J/C A41</text>
<text x="250.7" y="503.7" fill="#333333" stroke="#333333" stroke-width="0.12" font-size="6.85" text-anchor="start">YEL</text>
<text x="283.0" y="503.7" fill="#555" stroke="#555" stroke-width="0.12" font-size="6.85" text-anchor="start">9</text>
<text x="327.2" y="503.7" fill="#555" stroke="#555" stroke-width="0.12" font-size="6.85" text-anchor="start">8</text>
<text x="350.8" y="503.7" fill="#333333" stroke="#333333" stroke-width="0.12" font-size="6.85" text-anchor="start">WHT</text>
<path d="M226.4,646.5 H251.9 M229.6,643.3 L226.4,646.5 L229.6,649.7" fill="none" stroke="#40405a" stroke-width="1" />
<path d="M223.2,642.6 Q219.8,646.5 223.2,650.4" fill="none" stroke="#585858" stroke-width="1.1" />
<circle cx="251.7" cy="646.5" r="2.3" fill="#000"/>
<path d="M254.2,642.5 V650.5" fill="none" stroke="#666" stroke-width="0.9" />
<path d="M255.9,643.8 V649.2" fill="none" stroke="#777" stroke-width="0.9" />
<path d="M257.5,645.1 V647.9" fill="none" stroke="#888" stroke-width="0.9" />
<text x="259.8" y="648.7" fill="#5b7fc9" stroke="#5b7fc9" stroke-width="0.12" font-size="6.85" text-anchor="start">A2</text>
<text x="213.7" y="642.9" fill="#555" stroke="#555" stroke-width="0.12" font-size="6.85" text-anchor="start">3</text>
<text x="239.0" y="622.8" fill="#333333" stroke="#333333" stroke-width="0.12" font-size="6.85" text-anchor="middle">(BEHIND LEFT HEADLIGHT)</text>
<text x="239.0" y="631.0" fill="#5b7fc9" stroke="#5b7fc9" stroke-width="0.12" font-size="6.85" text-anchor="middle">J/C A43</text>
<path d="M837,387.8 Q832.8,391.7 837,395.59999999999997" fill="none" stroke="#585858" stroke-width="1.1" />
<path d="M843.2,388.3 L839.8,391.7 L843.2,395.09999999999997" fill="none" stroke="#44445a" stroke-width="1.2" />
<path d="M837,411.1 Q832.8,415 837,418.9" fill="none" stroke="#585858" stroke-width="1.1" />
<path d="M843.2,411.6 L839.8,415 L843.2,418.4" fill="none" stroke="#44445a" stroke-width="1.2" />
<path d="M837,422.8 Q832.8,426.7 837,430.59999999999997" fill="none" stroke="#585858" stroke-width="1.1" />
<path d="M843.2,423.3 L839.8,426.7 L843.2,430.09999999999997" fill="none" stroke="#44445a" stroke-width="1.2" />
<path d="M837,446.1 Q832.8,450 837,453.9" fill="none" stroke="#585858" stroke-width="1.1" />
<path d="M843.2,446.6 L839.8,450 L843.2,453.4" fill="none" stroke="#44445a" stroke-width="1.2" />
<path d="M837,469.3 Q832.8,473.2 837,477.09999999999997" fill="none" stroke="#585858" stroke-width="1.1" />
<path d="M843.2,469.8 L839.8,473.2 L843.2,476.59999999999997" fill="none" stroke="#44445a" stroke-width="1.2" />
<path d="M839.8,391.7 H855.4 V426.7 H839.8 M839.8,415 H855.4" fill="none" stroke="#4c4c60" stroke-width="1.3" />
<path d="M839.8,450 H855.4 V473.2 H839.8" fill="none" stroke="#4c4c60" stroke-width="1.3" />
<circle cx="855.4" cy="415.0" r="1.6" fill="#000"/>
<text x="861.9" y="350.2" fill="#333333" stroke="#333333" stroke-width="0.12" font-size="6.85" text-anchor="end">(BEHIND RIGHT</text>
<text x="863.9" y="358.8" fill="#333333" stroke="#333333" stroke-width="0.12" font-size="6.85" text-anchor="end">SIDE OF DASH)</text>
<text x="861.9" y="368.0" fill="#5b7fc9" stroke="#5b7fc9" stroke-width="0.12" font-size="6.85" text-anchor="end">J/C A58, E40,</text>
<text x="863.8" y="376.0" fill="#5b7fc9" stroke="#5b7fc9" stroke-width="0.12" font-size="6.85" text-anchor="end">A41 &amp; A42</text>
<text x="809.1" y="388.0" fill="#333333" stroke="#333333" stroke-width="0.12" font-size="6.85" text-anchor="end">YEL</text>
<text x="832.2" y="388.0" fill="#555" stroke="#555" stroke-width="0.12" font-size="6.85" text-anchor="end">6</text>
<text x="809.1" y="412.0" fill="#333333" stroke="#333333" stroke-width="0.12" font-size="6.85" text-anchor="end">LT GRN</text>
<text x="832.2" y="412.0" fill="#555" stroke="#555" stroke-width="0.12" font-size="6.85" text-anchor="end">1</text>
<text x="809.1" y="423.0" fill="#333333" stroke="#333333" stroke-width="0.12" font-size="6.85" text-anchor="end">BLK</text>
<text x="832.2" y="423.0" fill="#555" stroke="#555" stroke-width="0.12" font-size="6.85" text-anchor="end">2</text>
<text x="809.1" y="446.3" fill="#333333" stroke="#333333" stroke-width="0.12" font-size="6.85" text-anchor="end">BRN</text>
<text x="832.2" y="446.3" fill="#555" stroke="#555" stroke-width="0.12" font-size="6.85" text-anchor="end">17</text>
<text x="809.1" y="469.5" fill="#333333" stroke="#333333" stroke-width="0.12" font-size="6.85" text-anchor="end">WHT/BLK</text>
<text x="832.2" y="469.5" fill="#555" stroke="#555" stroke-width="0.12" font-size="6.85" text-anchor="end">16</text>
<text x="832.4" y="399.8" fill="#5b7fc9" stroke="#5b7fc9" stroke-width="0.12" font-size="6.85" text-anchor="end" text-decoration="underline">E40</text>
<text x="832.4" y="434.8" fill="#5b7fc9" stroke="#5b7fc9" stroke-width="0.12" font-size="6.85" text-anchor="end" text-decoration="underline">A58</text>
<text x="832.4" y="458.1" fill="#5b7fc9" stroke="#5b7fc9" stroke-width="0.12" font-size="6.85" text-anchor="end" text-decoration="underline">A41</text>
<text x="832.4" y="481.3" fill="#5b7fc9" stroke="#5b7fc9" stroke-width="0.12" font-size="6.85" text-anchor="end" text-decoration="underline">A42</text>
<circle cx="741.8" cy="473.2" r="2.2" fill="#000"/>
<path d="M738.4,469.6 V476.8 M736.6,470.8 V475.6 M735,472 V474.4" fill="none" stroke="#444" stroke-width="0.8" />
<text x="733.6" y="476.4" fill="#5b7fc9" stroke="#5b7fc9" stroke-width="0.12" font-size="6.85" text-anchor="end">A3</text>
<text x="733.2" y="485.6" fill="#333333" stroke="#333333" stroke-width="0.12" font-size="6.85" text-anchor="end">(BEHIND</text>
<text x="732.4" y="494.2" fill="#333333" stroke="#333333" stroke-width="0.12" font-size="6.85" text-anchor="end">LEFT SIDE</text>
<text x="734.0" y="502.8" fill="#333333" stroke="#333333" stroke-width="0.12" font-size="6.85" text-anchor="end">OF DASH)</text>
<text x="534.9" y="361.8" fill="#5b7fc9" stroke="#5b7fc9" stroke-width="0.12" font-size="6.85" text-anchor="end">A3</text>
<text x="532.9" y="344.6" fill="#333333" stroke="#333333" stroke-width="0.12" font-size="6.85" text-anchor="end">(BEHIND LEFT</text>
<text x="535.3" y="353.2" fill="#333333" stroke="#333333" stroke-width="0.12" font-size="6.85" text-anchor="end">SIDE OF DASH)</text>
<text x="542.2" y="340.6" fill="#333333" stroke="#333333" stroke-width="0.12" font-size="6.85" text-anchor="start" transform="rotate(-90 542.2 340.6)">WHT/BLK</text>
<text x="669.2" y="331.0" fill="#333333" stroke="#333333" stroke-width="0.12" font-size="6.85" text-anchor="start" transform="rotate(-90 669.2 331.0)">WHT</text>
<text x="846.2" y="249.1" fill="#333333" stroke="#333333" stroke-width="0.12" font-size="6.85" text-anchor="end">BLK</text>
<text x="867.0" y="254.4" fill="#555" stroke="#555" stroke-width="0.12" font-size="6.85" text-anchor="middle">1</text>
<text x="846.2" y="260.6" fill="#333333" stroke="#333333" stroke-width="0.12" font-size="6.85" text-anchor="end">BLK</text>
<text x="867.0" y="265.9" fill="#555" stroke="#555" stroke-width="0.12" font-size="6.85" text-anchor="middle">2</text>
<text x="846.2" y="272.3" fill="#333333" stroke="#333333" stroke-width="0.12" font-size="6.85" text-anchor="end">RED</text>
<text x="867.0" y="277.6" fill="#555" stroke="#555" stroke-width="0.12" font-size="6.85" text-anchor="middle">3</text>
<text x="846.2" y="284.0" fill="#333333" stroke="#333333" stroke-width="0.12" font-size="6.85" text-anchor="end">RED</text>
<text x="867.0" y="289.3" fill="#555" stroke="#555" stroke-width="0.12" font-size="6.85" text-anchor="middle">4</text>
<text x="846.2" y="318.6" fill="#333333" stroke="#333333" stroke-width="0.12" font-size="6.85" text-anchor="end">YEL</text>
<text x="867.0" y="323.9" fill="#555" stroke="#555" stroke-width="0.12" font-size="6.85" text-anchor="middle">5</text>
<text x="846.2" y="503.8" fill="#333333" stroke="#333333" stroke-width="0.12" font-size="6.85" text-anchor="end">WHT</text>
<text x="867.0" y="509.1" fill="#555" stroke="#555" stroke-width="0.12" font-size="6.85" text-anchor="middle">6</text>
<text x="846.2" y="515.2" fill="#333333" stroke="#333333" stroke-width="0.12" font-size="6.85" text-anchor="end">BLK</text>
<text x="867.0" y="520.5" fill="#555" stroke="#555" stroke-width="0.12" font-size="6.85" text-anchor="middle">7</text>
<text x="846.2" y="538.5" fill="#333333" stroke="#333333" stroke-width="0.12" font-size="6.85" text-anchor="end">VIO</text>
<text x="867.0" y="543.8" fill="#555" stroke="#555" stroke-width="0.12" font-size="6.85" text-anchor="middle">8</text>
<text x="846.2" y="550.1" fill="#333333" stroke="#333333" stroke-width="0.12" font-size="6.85" text-anchor="end">BRN</text>
<text x="867.0" y="555.4" fill="#555" stroke="#555" stroke-width="0.12" font-size="6.85" text-anchor="middle">9</text>
<text x="846.2" y="596.4" fill="#333333" stroke="#333333" stroke-width="0.12" font-size="6.85" text-anchor="end">YEL</text>
<text x="867.0" y="601.6" fill="#555" stroke="#555" stroke-width="0.12" font-size="6.85" text-anchor="middle">10</text>
<text x="846.2" y="653.6" fill="#333333" stroke="#333333" stroke-width="0.12" font-size="6.85" text-anchor="end">WHT</text>
<text x="867.0" y="658.9" fill="#555" stroke="#555" stroke-width="0.12" font-size="6.85" text-anchor="middle">11</text>
<text x="846.2" y="665.8" fill="#333333" stroke="#333333" stroke-width="0.12" font-size="6.85" text-anchor="end">GRN</text>
<text x="867.0" y="671.1" fill="#555" stroke="#555" stroke-width="0.12" font-size="6.85" text-anchor="middle">12</text>
<text x="846.2" y="758.3" fill="#333333" stroke="#333333" stroke-width="0.12" font-size="6.85" text-anchor="end">WHT</text>
<text x="867.0" y="763.6" fill="#555" stroke="#555" stroke-width="0.12" font-size="6.85" text-anchor="middle">13</text>
<text x="197.6" y="95.0" fill="#333333" stroke="#333333" stroke-width="0.12" font-size="6.85" text-anchor="middle">HOT AT</text>
<text x="197.6" y="103.6" fill="#333333" stroke="#333333" stroke-width="0.12" font-size="6.85" text-anchor="middle">ALL TIMES</text>
<text x="243.5" y="95.0" fill="#333333" stroke="#333333" stroke-width="0.12" font-size="6.85" text-anchor="middle">HOT AT</text>
<text x="243.5" y="103.6" fill="#333333" stroke="#333333" stroke-width="0.12" font-size="6.85" text-anchor="middle">ALL TIMES</text>
<text x="428.2" y="95.0" fill="#333333" stroke="#333333" stroke-width="0.12" font-size="6.85" text-anchor="middle">HOT AT</text>
<text x="428.2" y="103.6" fill="#333333" stroke="#333333" stroke-width="0.12" font-size="6.85" text-anchor="middle">ALL TIMES</text>
<text x="169.4" y="113.1" fill="#5b7fc9" stroke="#5b7fc9" stroke-width="0.12" font-size="6.85" text-anchor="end">ENGINE</text>
<text x="171.4" y="122.2" fill="#5b7fc9" stroke="#5b7fc9" stroke-width="0.12" font-size="6.85" text-anchor="end">ROOM R/B</text>
<text x="169.3" y="130.9" fill="#333333" stroke="#333333" stroke-width="0.12" font-size="6.85" text-anchor="end">(LEFT SIDE</text>
<text x="169.3" y="139.4" fill="#333333" stroke="#333333" stroke-width="0.12" font-size="6.85" text-anchor="end">OF ENGINE</text>
<text x="171.5" y="147.8" fill="#333333" stroke="#333333" stroke-width="0.12" font-size="6.85" text-anchor="end">COMPT)</text>
<text x="203.8" y="131.4" fill="#5b7fc9" stroke="#5b7fc9" stroke-width="0.12" font-size="6.85" text-anchor="start">ETCS</text>
<text x="203.8" y="140.5" fill="#5b7fc9" stroke="#5b7fc9" stroke-width="0.12" font-size="6.85" text-anchor="start">FUSE</text>
<text x="203.8" y="148.6" fill="#333333" stroke="#333333" stroke-width="0.12" font-size="6.85" text-anchor="start">10A</text>
<text x="250.1" y="131.4" fill="#5b7fc9" stroke="#5b7fc9" stroke-width="0.12" font-size="6.85" text-anchor="start">EFI</text>
<text x="250.1" y="140.5" fill="#5b7fc9" stroke="#5b7fc9" stroke-width="0.12" font-size="6.85" text-anchor="start">MAIN</text>
<text x="250.1" y="149.6" fill="#5b7fc9" stroke="#5b7fc9" stroke-width="0.12" font-size="6.85" text-anchor="start">FUSE</text>
<text x="250.1" y="156.8" fill="#333333" stroke="#333333" stroke-width="0.12" font-size="6.85" text-anchor="start">30A</text>
<text x="434.8" y="132.0" fill="#5b7fc9" stroke="#5b7fc9" stroke-width="0.12" font-size="6.85" text-anchor="start">EFI 2</text>
<text x="434.8" y="140.7" fill="#5b7fc9" stroke="#5b7fc9" stroke-width="0.12" font-size="6.85" text-anchor="start">FUSE</text>
<text x="434.8" y="147.8" fill="#333333" stroke="#333333" stroke-width="0.12" font-size="6.85" text-anchor="start">30A</text>
<text x="391.5" y="138.6" fill="#5b7fc9" stroke="#5b7fc9" stroke-width="0.12" font-size="6.85" text-anchor="start">EFI</text>
<text x="391.5" y="147.7" fill="#5b7fc9" stroke="#5b7fc9" stroke-width="0.12" font-size="6.85" text-anchor="start">MAIN</text>
<text x="391.5" y="156.8" fill="#5b7fc9" stroke="#5b7fc9" stroke-width="0.12" font-size="6.85" text-anchor="start">RELAY</text>
<text x="646.8" y="149.2" fill="#5b7fc9" stroke="#5b7fc9" stroke-width="0.12" font-size="6.85" text-anchor="start">EFI</text>
<text x="646.8" y="157.7" fill="#5b7fc9" stroke="#5b7fc9" stroke-width="0.12" font-size="6.85" text-anchor="start">RELAY</text>
<text x="773.8" y="147.0" fill="#5b7fc9" stroke="#5b7fc9" stroke-width="0.12" font-size="6.85" text-anchor="start">C/OPN</text>
<text x="773.8" y="156.2" fill="#5b7fc9" stroke="#5b7fc9" stroke-width="0.12" font-size="6.85" text-anchor="start">RELAY</text>
<text x="813.6" y="114.2" fill="#5b7fc9" stroke="#5b7fc9" stroke-width="0.12" font-size="6.85" text-anchor="start">ENGINE</text>
<text x="813.6" y="123.1" fill="#5b7fc9" stroke="#5b7fc9" stroke-width="0.12" font-size="6.85" text-anchor="start">ROOM J/B</text>
<text x="813.6" y="131.9" fill="#333333" stroke="#333333" stroke-width="0.12" font-size="6.85" text-anchor="start">(LEFT SIDE</text>
<text x="813.6" y="140.4" fill="#333333" stroke="#333333" stroke-width="0.12" font-size="6.85" text-anchor="start">OF ENGINE</text>
<text x="813.6" y="148.8" fill="#333333" stroke="#333333" stroke-width="0.12" font-size="6.85" text-anchor="start">COMPT)</text>
<text x="195.0" y="217.2" fill="#333333" stroke="#333333" stroke-width="0.12" font-size="6.85" text-anchor="end" transform="rotate(-90 195.0 217.2)">LT GRN</text>
<text x="241.0" y="217.2" fill="#333333" stroke="#333333" stroke-width="0.12" font-size="6.85" text-anchor="end" transform="rotate(-90 241.0 217.2)">WHT</text>
<text x="287.0" y="217.2" fill="#333333" stroke="#333333" stroke-width="0.12" font-size="6.85" text-anchor="end" transform="rotate(-90 287.0 217.2)">WHT</text>
<text x="299.0" y="217.2" fill="#333333" stroke="#333333" stroke-width="0.12" font-size="6.85" text-anchor="end" transform="rotate(-90 299.0 217.2)">WHT/BLK</text>
<text x="321.6" y="217.2" fill="#333333" stroke="#333333" stroke-width="0.12" font-size="6.85" text-anchor="end" transform="rotate(-90 321.6 217.2)">ORG</text>
<text x="368.0" y="217.2" fill="#333333" stroke="#333333" stroke-width="0.12" font-size="6.85" text-anchor="end" transform="rotate(-90 368.0 217.2)">BLK</text>
<text x="425.6" y="217.2" fill="#333333" stroke="#333333" stroke-width="0.12" font-size="6.85" text-anchor="end" transform="rotate(-90 425.6 217.2)">YEL</text>
<text x="519.0" y="200.0" fill="#333333" stroke="#333333" stroke-width="0.12" font-size="6.85" text-anchor="end" transform="rotate(-90 519.0 200.0)">E12</text>
<text x="519.0" y="217.4" fill="#333333" stroke="#333333" stroke-width="0.12" font-size="6.85" text-anchor="end" transform="rotate(-90 519.0 217.4)">YEL</text>
<text x="542.0" y="200.0" fill="#333333" stroke="#333333" stroke-width="0.12" font-size="6.85" text-anchor="end" transform="rotate(-90 542.0 200.0)">E11</text>
<text x="542.0" y="217.4" fill="#333333" stroke="#333333" stroke-width="0.12" font-size="6.85" text-anchor="end" transform="rotate(-90 542.0 217.4)">BRN</text>
<text x="565.2" y="200.0" fill="#333333" stroke="#333333" stroke-width="0.12" font-size="6.85" text-anchor="end" transform="rotate(-90 565.2 200.0)">E10</text>
<text x="565.2" y="217.4" fill="#333333" stroke="#333333" stroke-width="0.12" font-size="6.85" text-anchor="end" transform="rotate(-90 565.2 217.4)">BRN</text>
<text x="588.0" y="200.0" fill="#333333" stroke="#333333" stroke-width="0.12" font-size="6.85" text-anchor="end" transform="rotate(-90 588.0 200.0)">E9</text>
<text x="588.0" y="217.4" fill="#333333" stroke="#333333" stroke-width="0.12" font-size="6.85" text-anchor="end" transform="rotate(-90 588.0 217.4)">BLK</text>
<text x="669.2" y="200.0" fill="#333333" stroke="#333333" stroke-width="0.12" font-size="6.85" text-anchor="end" transform="rotate(-90 669.2 200.0)">E7</text>
<text x="669.2" y="223.0" fill="#333333" stroke="#333333" stroke-width="0.12" font-size="6.85" text-anchor="end" transform="rotate(-90 669.2 223.0)">BLU</text>
<text x="692.2" y="200.0" fill="#333333" stroke="#333333" stroke-width="0.12" font-size="6.85" text-anchor="end" transform="rotate(-90 692.2 200.0)">E8</text>
<text x="692.2" y="223.0" fill="#333333" stroke="#333333" stroke-width="0.12" font-size="6.85" text-anchor="end" transform="rotate(-90 692.2 223.0)">YEL</text>
<text x="715.4" y="200.0" fill="#333333" stroke="#333333" stroke-width="0.12" font-size="6.85" text-anchor="end" transform="rotate(-90 715.4 200.0)">D12</text>
<text x="715.4" y="222.6" fill="#333333" stroke="#333333" stroke-width="0.12" font-size="6.85" text-anchor="end" transform="rotate(-90 715.4 222.6)">LT GRN</text>
<text x="750.2" y="200.0" fill="#333333" stroke="#333333" stroke-width="0.12" font-size="6.85" text-anchor="end" transform="rotate(-90 750.2 200.0)">E13</text>
<text x="750.2" y="223.0" fill="#333333" stroke="#333333" stroke-width="0.12" font-size="6.85" text-anchor="end" transform="rotate(-90 750.2 223.0)">GRY</text>
</g></g></svg></body></html>
